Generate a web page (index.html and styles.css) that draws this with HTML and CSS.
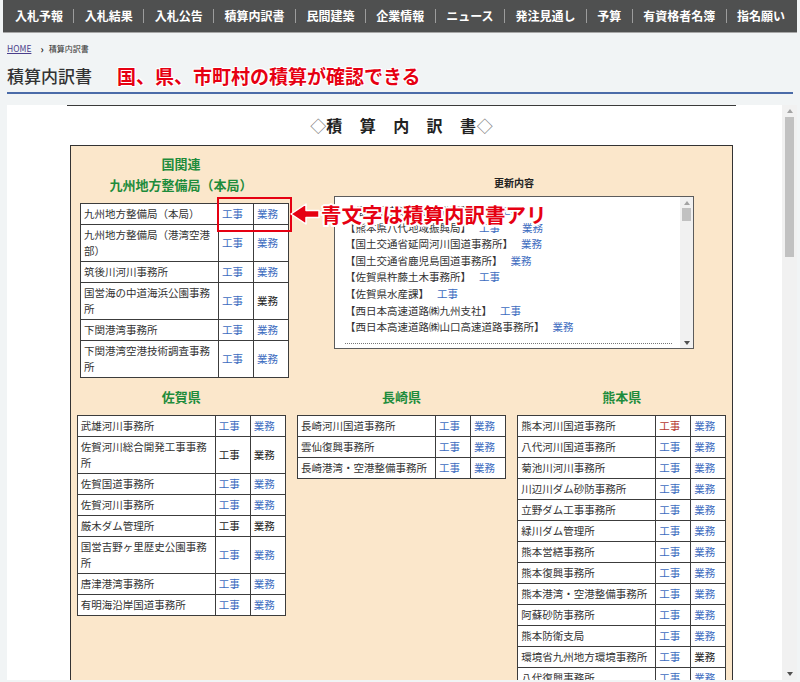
FILE: index.html
```html
<!DOCTYPE html>
<html lang="ja">
<head>
<meta charset="utf-8">
<title>積算内訳書</title>
<link rel="stylesheet" href="styles.css">
</head>
<body>
<nav class="gnav">
  <a href="#">入札予報</a><span class="sep"></span>
  <a href="#">入札結果</a><span class="sep"></span>
  <a href="#">入札公告</a><span class="sep"></span>
  <a href="#">積算内訳書</a><span class="sep"></span>
  <a href="#">民間建築</a><span class="sep"></span>
  <a href="#">企業情報</a><span class="sep"></span>
  <a href="#">ニュース</a><span class="sep"></span>
  <a href="#">発注見通し</a><span class="sep"></span>
  <a href="#">予算</a><span class="sep"></span>
  <a href="#">有資格者名簿</a><span class="sep"></span>
  <a href="#">指名願い</a>
</nav>

<div class="crumb"><a class="home" href="#">HOME</a><span class="chev">›</span><span class="here">積算内訳書</span></div>

<div class="pagehead">
  <h1>積算内訳書</h1>
  <p class="catch">国、県、市町村の積算が確認できる</p>
</div>

<div class="frame">
  <div class="frame-body">
    <div class="doc">
      <h2 class="doc-title"><span class="dia">◇</span>積　算　内　訳　書<span class="dia">◇</span></h2>
      <div class="sheet">
        <div class="upper">
          <div class="col-left">
            <h3 class="area">国関連<br>九州地方整備局（本局）</h3>
            <table class="list first">
              <colgroup><col class="cn"><col class="ck"><col class="cg"></colgroup>
              <tr><td>九州地方整備局（本局）</td><td><a href="#">工事</a></td><td><a href="#">業務</a></td></tr>
              <tr><td>九州地方整備局（港湾空港部）</td><td><a href="#">工事</a></td><td><a href="#">業務</a></td></tr>
              <tr><td>筑後川河川事務所</td><td><a href="#">工事</a></td><td><a href="#">業務</a></td></tr>
              <tr><td>国営海の中道海浜公園事務所</td><td><a href="#">工事</a></td><td>業務</td></tr>
              <tr><td>下関港湾事務所</td><td><a href="#">工事</a></td><td><a href="#">業務</a></td></tr>
              <tr><td>下関港湾空港技術調査事務所</td><td><a href="#">工事</a></td><td><a href="#">業務</a></td></tr>
            </table>
          </div>
          <div class="updates">
            <h4>更新内容</h4>
            <div class="upbox">
              <div class="uplist">
                <p>【福岡県京築県土整備事務所】<a href="#">工事</a></p>
                <p>【熊本県八代地域振興局】<a href="#">工事</a><a class="wide" href="#">業務</a></p>
                <p>【国土交通省延岡河川国道事務所】<a href="#">業務</a></p>
                <p>【国土交通省鹿児島国道事務所】<a href="#">業務</a></p>
                <p>【佐賀県杵藤土木事務所】<a href="#">工事</a></p>
                <p>【佐賀県水産課】<a href="#">工事</a></p>
                <p>【西日本高速道路㈱九州支社】<a href="#">工事</a></p>
                <p>【西日本高速道路㈱山口高速道路事務所】<a href="#">業務</a></p>
                <div class="dots"></div>
              </div>
              <div class="vscroll mini">
                <span class="arr up"></span>
                <span class="thumb"></span>
                <span class="fill"></span>
                <span class="arr down"></span>
              </div>
            </div>
          </div>
        </div>

        <div class="lower">
          <div class="pref">
            <h3 class="area">佐賀県</h3>
            <table class="list">
              <colgroup><col class="cn"><col class="ck"><col class="cg"></colgroup>
              <tr><td>武雄河川事務所</td><td><a href="#">工事</a></td><td><a href="#">業務</a></td></tr>
              <tr><td>佐賀河川総合開発工事事務所</td><td>工事</td><td>業務</td></tr>
              <tr><td>佐賀国道事務所</td><td><a href="#">工事</a></td><td><a href="#">業務</a></td></tr>
              <tr><td>佐賀河川事務所</td><td><a href="#">工事</a></td><td><a href="#">業務</a></td></tr>
              <tr><td>厳木ダム管理所</td><td>工事</td><td>業務</td></tr>
              <tr><td>国営吉野ヶ里歴史公園事務所</td><td><a href="#">工事</a></td><td><a href="#">業務</a></td></tr>
              <tr><td>唐津港湾事務所</td><td><a href="#">工事</a></td><td><a href="#">業務</a></td></tr>
              <tr><td>有明海沿岸国道事務所</td><td><a href="#">工事</a></td><td><a href="#">業務</a></td></tr>
            </table>
          </div>
          <div class="pref">
            <h3 class="area">長崎県</h3>
            <table class="list">
              <colgroup><col class="cn"><col class="ck"><col class="cg"></colgroup>
              <tr><td>長崎河川国道事務所</td><td><a href="#">工事</a></td><td><a href="#">業務</a></td></tr>
              <tr><td>雲仙復興事務所</td><td><a href="#">工事</a></td><td><a href="#">業務</a></td></tr>
              <tr><td>長崎港湾・空港整備事務所</td><td><a href="#">工事</a></td><td><a href="#">業務</a></td></tr>
            </table>
          </div>
          <div class="pref">
            <h3 class="area">熊本県</h3>
            <table class="list">
              <colgroup><col class="cn"><col class="ck"><col class="cg"></colgroup>
              <tr><td>熊本河川国道事務所</td><td><a class="visited" href="#">工事</a></td><td><a href="#">業務</a></td></tr>
              <tr><td>八代河川国道事務所</td><td><a href="#">工事</a></td><td><a href="#">業務</a></td></tr>
              <tr><td>菊池川河川事務所</td><td><a href="#">工事</a></td><td><a href="#">業務</a></td></tr>
              <tr><td>川辺川ダム砂防事務所</td><td><a href="#">工事</a></td><td><a href="#">業務</a></td></tr>
              <tr><td>立野ダム工事事務所</td><td><a href="#">工事</a></td><td><a href="#">業務</a></td></tr>
              <tr><td>緑川ダム管理所</td><td><a href="#">工事</a></td><td><a href="#">業務</a></td></tr>
              <tr><td>熊本営繕事務所</td><td><a href="#">工事</a></td><td><a href="#">業務</a></td></tr>
              <tr><td>熊本復興事務所</td><td><a href="#">工事</a></td><td><a href="#">業務</a></td></tr>
              <tr><td>熊本港湾・空港整備事務所</td><td><a href="#">工事</a></td><td><a href="#">業務</a></td></tr>
              <tr><td>阿蘇砂防事務所</td><td><a href="#">工事</a></td><td><a href="#">業務</a></td></tr>
              <tr><td>熊本防衛支局</td><td><a href="#">工事</a></td><td><a href="#">業務</a></td></tr>
              <tr><td>環境省九州地方環境事務所</td><td><a href="#">工事</a></td><td>業務</td></tr>
              <tr><td>八代復興事務所</td><td><a href="#">工事</a></td><td><a href="#">業務</a></td></tr>
            </table>
          </div>
        </div>

        <div class="note-box"></div>
        <div class="note">
          <svg class="note-arrow" width="30" height="24" viewBox="0 0 30 24"><polygon points="1,12 16,2 16,8.5 29,8.5 29,15.5 16,15.5 16,22" fill="#e60012" stroke="#fff" stroke-width="1.5" stroke-linejoin="round"/></svg>
          <span class="note-text">青文字は積算内訳書アリ</span>
        </div>
      </div>
    </div>
  </div>
  <div class="vscroll main">
    <span class="arr up"></span>
    <span class="thumb"></span>
    <span class="fill"></span>
    <span class="arr down"></span>
  </div>
</div>
</body>
</html>
```

FILE: styles.css
```css
* { box-sizing: border-box; }
html, body { margin: 0; padding: 0; overflow: hidden; }
body {
  background: #f1f4f5;
  font-family: "Noto Sans CJK JP", "Noto Sans", sans-serif;
  color: #333;
  height: 682px;
}
a { text-decoration: none; }

/* global nav */
.gnav {
  margin: 0 3px;
  height: 33px;
  background: #4f5050;
  border-bottom: 1px solid #a7a7a7;
  display: flex;
  align-items: center;
  justify-content: space-between;
  padding: 0 12px 0 12px;
}
.gnav a {
  color: #fff;
  font-size: 12px;
  font-weight: 700;
  line-height: 1;
  white-space: nowrap;
}
.gnav .sep {
  width: 1px;
  height: 14px;
  background: #9c9c9c;
}

/* breadcrumb */
.crumb {
  margin-top: 9px;
  padding-left: 7px;
  height: 12px;
  display: flex;
  align-items: center;
  font-size: 8px;
  color: #333;
}
.crumb .home {
  font-size: 8.5px;
  color: #4b3f8c;
  text-decoration: underline;
}
.crumb .chev {
  margin: 0 5px 0 9px;
  font-weight: 700;
  font-size: 10px;
  color: #222;
}

/* page title */
.pagehead {
  margin: 11px 7px 0 7px;
  display: flex;
  align-items: center;
  height: 29px;
  padding-bottom: 5px;
  border-bottom: 2px solid #4a6ba8;
}
.pagehead h1 {
  margin: 0;
  font-size: 17px;
  font-weight: 500;
  line-height: 24px;
  color: #333;
}
.pagehead .catch {
  margin: 0 0 0 25px;
  font-size: 19px;
  font-weight: 700;
  line-height: 24px;
  color: #e60012;
  text-shadow: 1px 1px 0 #fff, -1px -1px 0 #fff, 1px -1px 0 #fff, -1px 1px 0 #fff;
}

/* framed area */
.frame {
  margin: 11px 3px 0 7px;
  height: 575px;
  display: flex;
  background: #fff;
}
.frame-body {
  flex: 1;
  overflow: hidden;
}
.vscroll {
  flex: none;
  width: 15px;
  background: #f1f1f1;
  display: flex;
  flex-direction: column;
  align-items: center;
}
.vscroll .arr {
  flex: none;
  height: 12px;
  width: 15px;
  display: flex;
  align-items: center;
  justify-content: center;
}
.vscroll .arr::before {
  content: "";
  border-left: 3.5px solid transparent;
  border-right: 3.5px solid transparent;
}
.vscroll .up::before { border-bottom: 4px solid #a3a3a3; }
.vscroll .down::before { border-top: 4px solid #505050; }
.vscroll .thumb {
  flex: none;
  width: 9px;
  background: #c1c1c1;
}
.vscroll .fill { flex: 1; }
.vscroll.main .thumb { height: 140px; }

.doc {
  margin-left: 60px;
  width: 669px;
  border-top: 1px solid #3a3a3a;
}
.doc-title {
  margin: 7px 0 0 0;
  text-align: center;
  font-size: 16px;
  line-height: 24px;
  font-weight: 700;
  letter-spacing: 0.7px;
  color: #222;
}
.doc-title .dia {
  font-weight: 400;
  color: #777;
  letter-spacing: 0;
}

.sheet {
  position: relative;
  margin: 8px 0 0 3px;
  width: 663px;
  background: #fbe7cb;
  border: 1px solid #333;
  padding: 7px 0 60px 0;
}

.upper {
  display: flex;
  align-items: flex-start;
}
.col-left {
  width: 220px;
  flex: none;
}
.area {
  margin: 0;
  text-align: center;
  font-size: 13px;
  line-height: 21px;
  font-weight: 700;
  color: #1e8c3c;
}

.list {
  border-collapse: collapse;
  table-layout: fixed;
  width: 208px;
  background: #fff;
  font-size: 10.5px;
  line-height: 16px;
}
.list col.cn { width: 138px; }
.list col.ck { width: 35px; }
.list col.cg { width: 35px; }
.list td {
  border: 1px solid #3c3c3c;
  padding: 2px 3px;
  vertical-align: middle;
  color: #333;
}
.list td:nth-child(n+2) { color: #222; }
.list a { color: #3d6cc0; }
.list a.visited { color: #b5392f; }
.list.first {
  margin: 8px 0 0 9px;
  width: 207px;
}

.updates {
  margin-left: 43px;
  width: 360px;
  flex: none;
  padding-top: 23px;
}
.updates h4 {
  margin: 0;
  text-align: center;
  font-size: 10px;
  line-height: 14px;
  font-weight: 700;
  color: #222;
}
.upbox {
  margin-top: 6px;
  height: 153px;
  border: 1px solid #5c5c5c;
  background: #fff;
  display: flex;
}
.uplist {
  flex: 1;
  overflow: hidden;
  padding: 6px 8px 0 10px;
  font-size: 10.5px;
  line-height: 16.6px;
  color: #333;
}
.uplist p { margin: 0; white-space: nowrap; }
.uplist a { color: #3d6cc0; margin-left: 8px; }
.uplist a.wide { margin-left: 22px; }
.uplist .dots {
  margin: 7px 0 0 0;
  border-top: 1px dotted #777;
}
.vscroll.mini {
  width: 13px;
  background: #f1f1f1;
}
.vscroll.mini .arr { width: 13px; height: 11px; }
.vscroll.mini .thumb { height: 13px; }

.lower {
  margin-top: 8px;
  display: grid;
  grid-template-columns: repeat(3, 1fr);
}
.pref .list { margin: 8px auto 0 auto; }

/* annotation overlay */
.note-box {
  position: absolute;
  left: 146px;
  top: 51px;
  width: 75px;
  height: 35px;
  border: 2px solid #e60012;
}
.note {
  position: absolute;
  left: 219px;
  top: 55px;
  display: flex;
  align-items: center;
  height: 26px;
}
.note-arrow { display: block; }
.note-text {
  margin-left: 1px;
  font-size: 20.5px;
  font-weight: 700;
  line-height: 26px;
  color: #e60012;
  white-space: nowrap;
  text-shadow: 2px 0 0 #fff, -2px 0 0 #fff, 0 2px 0 #fff, 0 -2px 0 #fff,
    1.5px 1.5px 0 #fff, -1.5px -1.5px 0 #fff, 1.5px -1.5px 0 #fff, -1.5px 1.5px 0 #fff;
}
```
